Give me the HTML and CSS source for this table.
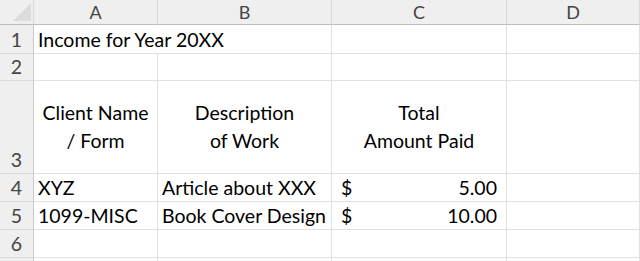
FILE: index.html
```html
<!DOCTYPE html>
<html>
<head>
<meta charset="utf-8">
<link rel="stylesheet" href="styles.css">
</head>
<body>
<div class="sheet">
  <div class="corner"><span class="tri"></span></div>
  <div class="ch">A</div>
  <div class="ch">B</div>
  <div class="ch">C</div>
  <div class="ch">D</div>

  <div class="rh">1</div>
  <div class="c span2">Income for Year 20XX</div>
  <div class="c"></div>
  <div class="c"></div>

  <div class="rh">2</div>
  <div class="c"></div>
  <div class="c"></div>
  <div class="c"></div>
  <div class="c"></div>

  <div class="rh">3</div>
  <div class="c wrap">Client Name<br>/ Form</div>
  <div class="c wrap">Description<br>of Work</div>
  <div class="c wrap">Total<br>Amount Paid</div>
  <div class="c"></div>

  <div class="rh">4</div>
  <div class="c">XYZ</div>
  <div class="c">Article about XXX</div>
  <div class="c acct"><span>$</span><span>5.00</span></div>
  <div class="c"></div>

  <div class="rh">5</div>
  <div class="c">1099-MISC</div>
  <div class="c">Book Cover Design</div>
  <div class="c acct"><span>$</span><span>10.00</span></div>
  <div class="c"></div>

  <div class="rh">6</div>
  <div class="c"></div>
  <div class="c"></div>
  <div class="c"></div>
  <div class="c"></div>

  <div class="rh"></div>
  <div class="c"></div>
  <div class="c"></div>
  <div class="c"></div>
  <div class="c"></div>
</div>
</body>
</html>
```

FILE: styles.css
```css
html, body {
  margin: 0;
  padding: 0;
  background: #ffffff;
}

body {
  font-family: "Lato", "Liberation Sans", sans-serif;
  font-size: 19.5px;
  color: #000;
  overflow: hidden;
}

.sheet {
  display: grid;
  grid-template-columns: 34px 124px 174px 175px 133px;
  grid-template-rows: 25px 29px 27px 93px 28px 28px 28px 20px;
  width: 640px;
  height: 261px;
  overflow: hidden;
}

.corner {
  background: #efefef;
  border-right: 1px solid #dadada;
  border-bottom: 1px solid #bdbdbd;
  box-sizing: border-box;
  position: relative;
}

.tri {
  position: absolute;
  right: 2px;
  bottom: 3px;
  width: 0;
  height: 0;
  border-left: 18px solid transparent;
  border-bottom: 18px solid #dcdcdc;
}

.ch {
  background: #efefef;
  color: #444;
  font-size: 18px;
  box-sizing: border-box;
  border-right: 1px solid #dadada;
  border-bottom: 1px solid #bdbdbd;
  display: flex;
  align-items: center;
  justify-content: center;
  line-height: 24px;
}

.rh {
  background: #efefef;
  color: #444;
  box-sizing: border-box;
  border-right: 1px solid #c8c8c8;
  border-bottom: 1px solid #dadada;
  display: flex;
  align-items: flex-end;
  justify-content: center;
  line-height: 26px;
}

.c {
  box-sizing: border-box;
  border-right: 1px solid #e1e1e1;
  border-bottom: 1px solid #e1e1e1;
  display: flex;
  align-items: flex-end;
  padding: 0 4px;
  line-height: 26px;
  white-space: nowrap;
}

.span2 {
  grid-column: span 2;
}

.wrap {
  align-items: center;
  justify-content: center;
  text-align: center;
  line-height: 28px;
}

.acct {
  justify-content: space-between;
  padding: 0 9px;
}
```
